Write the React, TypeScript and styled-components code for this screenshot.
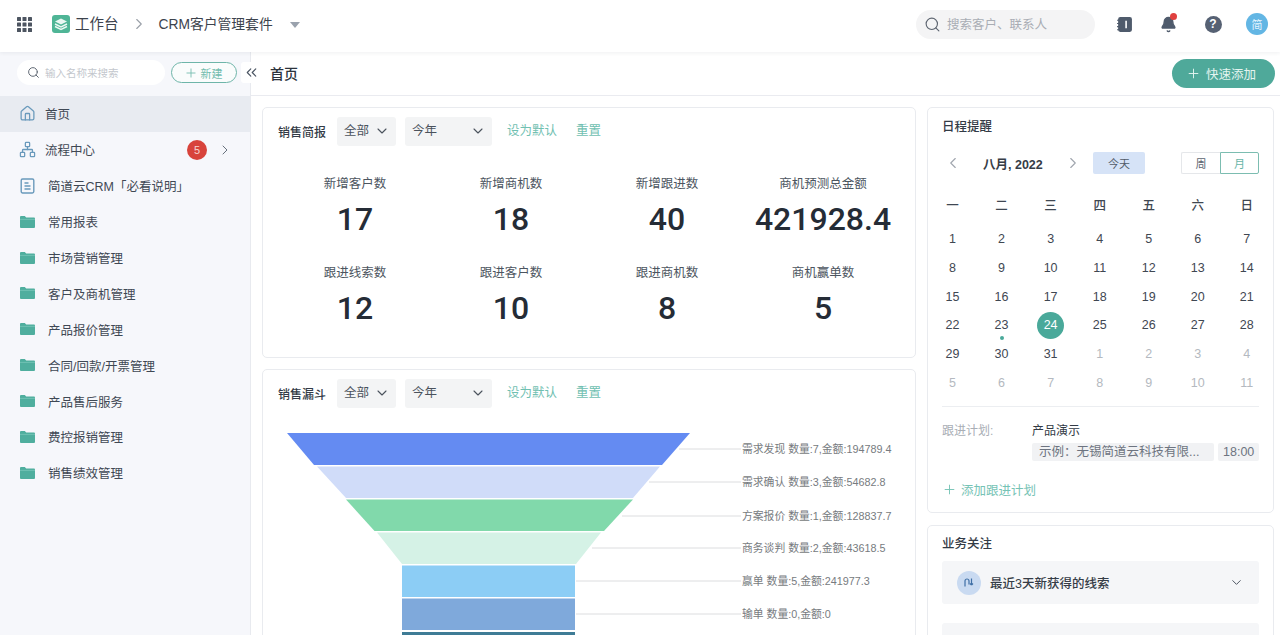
import React from "react";
import styled, { createGlobalStyle } from "styled-components";
import { ChevronRight, ChevronLeft, ChevronDown, ChevronsLeft, Home, Network, Search, Plus, Bell } from "lucide-react";

const Global = createGlobalStyle`
  html, body { margin: 0; padding: 0; height: 100%; overflow: hidden; background: #fff; }
  body { font-family: "Liberation Sans", "Noto Sans CJK SC", sans-serif; color: #2f3742; }
  #root { height: 100%; }
  * { box-sizing: border-box; }
`;

const Page = styled.div`height: 635px; display: flex; flex-direction: column; overflow: hidden;`;
const TopBar = styled.header`
  height: 52px; flex: none; display: flex; align-items: center; background: #fff; padding: 0 11px 4px 17px;
  position: relative; z-index: 2; box-shadow: 0 1px 4px rgba(30,40,60,.07);
`;
const Brand = styled.div`display: flex; align-items: center; margin-left: 20px; font-size: 14.5px; color: #3c434d; gap: 5px;`;
const BrandName = styled.span`padding-bottom: 3px;`;
const Crumb = styled.div`margin-left: 11px; font-size: 13.8px; color: #3c434d; white-space: nowrap; padding-bottom: 2px;`;
const CrumbSep = styled.span`display: flex; margin-left: 11px; color: #9aa0a8;`;
const Caret = styled.span`width: 0; height: 0; margin-left: 17px; margin-top: 2px; border-left: 5px solid transparent; border-right: 5px solid transparent; border-top: 6px solid #9aa2ad;`;
const TopRight = styled.div`margin-left: auto; display: flex; align-items: center;`;
const TopSearch = styled.div`
  width: 179px; height: 29px; border-radius: 15px; background: #f4f4f5; display: flex; align-items: center;
  padding-left: 8px; gap: 6px; font-size: 12.5px; color: #a9adb4; margin-right: 20px;
`;
const SearchText = styled.span`padding-bottom: 2px;`;
const IconSlot = styled.div<{ $gap: number }>`width: 18px; height: 18px; margin-right: ${p => p.$gap}px; display: flex; align-items: center; justify-content: center; position: relative;`;
const RedDot = styled.span`position: absolute; width: 7px; height: 7px; border-radius: 50%; background: #e0413f; right: 0; top: -2px;`;
const HelpDot = styled.span`width: 17px; height: 17px; border-radius: 50%; background: #566173; color: #fff; font-size: 12px; font-weight: 700; display: flex; align-items: center; justify-content: center;`;
const Avatar = styled.span`width: 22px; height: 22px; margin-right: 1px; border-radius: 50%; background: #63b6e4; color: #e6f5ff; font-size: 11px; display: flex; align-items: center; justify-content: center;`;

const Body = styled.div`flex: 1; min-height: 0; display: flex;`;
const Side = styled.aside`width: 251px; flex: none; background: #f6f7fb; border-right: 1px solid #e8eaef; position: relative;`;
const SideTools = styled.div`height: 44px; display: flex; align-items: center; padding: 0 0 3px 17px; gap: 6px;`;
const SideSearch = styled.div`width: 148px; height: 25px; border-radius: 13px; background: #fff; display: flex; align-items: center; padding-left: 10px; gap: 5px; font-size: 10.5px; color: #c3c7cd;`;
const NewBtn = styled.div`width: 66px; height: 21px; border-radius: 11px; border: 1px solid #6eb5a9; background: #fafcfc; color: #72bcae; font-size: 11px; display: flex; align-items: center; justify-content: center; gap: 3px; padding-right: 2px;`;
const Collapse = styled.div`position: absolute; left: 241px; top: 10px; width: 21px; height: 21px; background: #fff; border-radius: 3px; color: #4a5462; display: flex; align-items: center; justify-content: center; z-index: 1;`;
const Row = styled.div<{ $active?: boolean }>`
  height: 35.9px; display: flex; align-items: center; padding-left: 19px; font-size: 12.5px; color: #3f4854;
  background: ${p => (p.$active ? "#e8ebf1" : "transparent")};
`;
const RowIcon = styled.span`width: 17px; display: flex; justify-content: center; color: #6a9abc;`;
const RowText = styled.span<{ $wide?: boolean }>`margin-left: ${p => (p.$wide ? "12px" : "9px")};`;
const Badge = styled.span`margin-left: auto; width: 20px; height: 20px; border-radius: 50%; background: #d8433b; color: #f6d5d0; font-size: 11px; display: flex; align-items: center; justify-content: center;`;
const RowArrow = styled.span`display: flex; margin: 0 17px 0 10px; color: #66707c;`;

const Main = styled.main`flex: 1; min-width: 0; display: flex; flex-direction: column;`;
const SubBar = styled.div`height: 44px; flex: none; display: flex; align-items: center; justify-content: space-between; border-bottom: 1px solid #eaebf0; padding: 0 5px 0 19px;`;
const PageTitle = styled.div`font-size: 14px; font-weight: 500; color: #2c333c; margin-bottom: 1px;`;
const QuickAdd = styled.div`width: 103px; height: 29px; border-radius: 15px; background: #4fa99a; color: #e4f4f0; font-size: 12.5px; display: flex; align-items: center; justify-content: center; gap: 5px; padding-right: 5px;`;
const Columns = styled.div`flex: 1; min-height: 0; display: flex; gap: 11px; padding: 11px 6px 0 11px; overflow: hidden;`;
const Col = styled.div<{ $w: number; $gap: number }>`width: ${p => p.$w}px; flex: none; display: flex; flex-direction: column; gap: ${p => p.$gap}px;`;
const Card = styled.section<{ $h?: number }>`
  background: #fff; border: 1px solid #e9ebef; border-radius: 5px; flex: none;
  ${p => (p.$h ? `height: ${p.$h}px;` : "")}
`;
const FilterBar = styled.div`display: flex; align-items: center; height: 30px; margin: 8px 0 0 15px; font-size: 12px;`;
const FilterTitle = styled.div`font-weight: 500; color: #333b46; width: 59px; font-size: 12px; padding-top: 1px;`;
const Pick = styled.div<{ $w: number }>`width: ${p => p.$w}px; height: 29px; background: #f3f4f5; border-radius: 3px; margin-right: 9px; display: flex; align-items: center; justify-content: space-between; padding: 0 6px 0 7px; color: #4a525c; font-size: 12.5px;`;
const PickText = styled.span`padding-bottom: 3px;`;
const LinkText = styled.span<{ $m: number }>`color: #70c0b1; margin-left: ${p => p.$m}px; font-size: 12.5px; padding-bottom: 3px;`;
const StatGrid = styled.div`display: grid; grid-template-columns: repeat(4, 156px); grid-auto-rows: 89px; padding: 28px 0 0 14px;`;
const Stat = styled.div`text-align: center;`;
const StatLabel = styled.div`font-size: 12.5px; line-height: 20px; color: #4c5560;`;
const StatValue = styled.div`font-family: Roboto, "Liberation Sans", sans-serif; font-weight: 500; font-size: 32px; line-height: 40px; margin-top: 5px; color: #252c36;`;
const ChartWrap = styled.div`height: 240px; margin-top: 12px;`;
const ChartSvg = styled.svg`display: block; font-family: "Liberation Sans", "Noto Sans CJK SC", sans-serif;`;

const CardTitle = styled.div`font-size: 12.5px; font-weight: 500; color: #333b46; padding: 10px 0 0 14px; line-height: 18px;`;
const CalHead = styled.div`display: flex; align-items: center; height: 22px; margin: 16px 14px 0 16px; color: #a0a6ae;`;
const Month = styled.div`font-size: 12.5px; font-weight: 700; color: #363d47; margin-left: 21px; width: 60px; white-space: nowrap;`;
const MonthNext = styled.span`display: flex; margin-left: 21px;`;
const Today = styled.div`width: 52px; height: 22px; margin-left: 11px; background: #d6e3f7; border-radius: 2px; color: #525b68; font-size: 11px; display: flex; align-items: center; justify-content: center;`;
const Seg = styled.div`margin-left: auto; display: flex; height: 22px;`;
const SegBtn = styled.div<{ $on?: boolean }>`width: 39px; border: 1px solid ${p => (p.$on ? "#7cbdb1" : "#e5e7ea")}; ${p => (p.$on ? "border-radius: 0 2px 2px 0;" : "border-radius: 2px 0 0 2px; border-right: none;")} color: ${p => (p.$on ? "#67b5a7" : "#5c6570")}; font-size: 11px; display: flex; align-items: center; justify-content: center;`;
const CalGrid = styled.div`display: grid; grid-template-columns: repeat(7, 49.05px); grid-auto-rows: 28.7px; justify-content: start;`;
const WeekRow = styled(CalGrid)`grid-auto-rows: 28px; margin: 16px 0 7px 0; font-weight: 500;`;
const Cell = styled.div<{ $muted?: boolean }>`display: flex; align-items: center; justify-content: center; font-size: 12.5px; color: ${p => (p.$muted ? "#b4b9c0" : "#3f4752")}; position: relative;`;
const TodayDot = styled.span`width: 27px; height: 27px; border-radius: 50%; background: #4aa99a; color: #fff; display: flex; align-items: center; justify-content: center;`;
const EventDot = styled.span`position: absolute; width: 4px; height: 4px; border-radius: 50%; background: #4aa99a; left: 50%; margin-left: -2px; bottom: 0;`;
const Divider = styled.div`height: 1px; background: #eceef1; margin: 9px 14px 0 14px;`;
const PlanRow = styled.div`display: flex; padding: 15px 14px 0 14px; font-size: 12px;`;
const PlanLabel = styled.div`width: 90px; color: #a9aeb5; line-height: 18px;`;
const PlanBody = styled.div`flex: 1; min-width: 0;`;
const PlanName = styled.div`line-height: 18px; color: #333b46; font-size: 12px;`;
const PlanTags = styled.div`display: flex; gap: 4px; margin-top: 3px;`;
const Tag = styled.div<{ $grow?: boolean }>`height: 18px; line-height: 18px; background: #f1f2f4; border-radius: 2px; color: #6d7480; font-size: 12.5px; padding: 0 5px; text-align: ${p => (p.$grow ? "left" : "center")}; ${p => (p.$grow ? "flex: 1; padding-left: 7px; white-space: nowrap;" : "width: 41px;")}`;
const AddPlan = styled.div`display: flex; align-items: center; gap: 4px; margin: 19px 0 0 14px; font-size: 12.5px; color: #76c3b5;`;
const FocusTitle = styled(CardTitle)`padding-top: 9px;`;
const Focus = styled.div`height: 43px; margin: 8px 14px 0 14px; background: #f5f6f8; border-radius: 3px; display: flex; align-items: center; padding: 0 15px; font-size: 12.5px; font-weight: 500; color: #363d47;`;
const FocusNext = styled(Focus)`margin-top: 19px;`;
const FocusIcon = styled.span`width: 24px; height: 24px; border-radius: 50%; background: #c9daf1; color: #3f6fa6; display: flex; align-items: center; justify-content: center; margin-right: 9px;`;
const FocusArrow = styled.span`margin-left: auto; display: flex; color: #4f5763;`;

const GridIcon = () => (
  <svg width="15" height="15" viewBox="0 0 15 15" fill="#4d5561">
    {[0, 5.5, 11].flatMap(y => [0, 5.5, 11].map(x => <rect key={`${x}-${y}`} x={x} y={y} width="4" height="4" rx=".6" />))}
  </svg>
);
const Logo = () => (
  <svg width="18" height="18" viewBox="0 0 18 18">
    <rect width="18" height="18" rx="3" fill="#4fb596" />
    <path d="M9 3.5l6 3-6 3-6-3z" fill="#eaf7f2" />
    <path d="M3 9l6 3 6-3M3 11.5l6 3 6-3" fill="none" stroke="#eaf7f2" strokeWidth="1.4" />
  </svg>
);
const Notebook = () => (
  <svg width="17" height="17" viewBox="0 0 16 16">
    <rect x="2" y="1" width="13" height="14" rx="2" fill="#4f5b6c" />
    <path d="M9.5 4.5v7" stroke="#fff" strokeWidth="1.5" />
    <path d="M1 4h2M1 7h2M1 10h2M1 13h2" stroke="#4f5b6c" strokeWidth="1" />
  </svg>
);
const DocIcon = () => (
  <svg width="15" height="16" viewBox="0 0 15 16" fill="none" stroke="currentColor" strokeWidth="1.4">
    <rect x="1.2" y="1" width="12.6" height="14" rx="1.4" />
    <path d="M4.5 5h4M4.5 8h6M4.5 11h6" />
  </svg>
);
const FolderIcon = () => (
  <svg width="15" height="12" viewBox="0 0 15 12">
    <path d="M0 1.2C0 .5.5 0 1.2 0h3.6l1.4 1.6h7.6c.7 0 1.2.5 1.2 1.2v7.9c0 .7-.5 1.3-1.2 1.3H1.2C.5 12 0 11.4 0 10.7z" fill="#4fae9e" />
    <path d="M0 3.4h15" stroke="#7fcabd" strokeWidth=".7" />
  </svg>
);

const stats = [
  ["新增客户数", "17"], ["新增商机数", "18"], ["新增跟进数", "40"], ["商机预测总金额", "421928.4"],
  ["跟进线索数", "12"], ["跟进客户数", "10"], ["跟进商机数", "8"], ["商机赢单数", "5"],
];
const folders = ["常用报表", "市场营销管理", "客户及商机管理", "产品报价管理", "合同/回款/开票管理", "产品售后服务", "费控报销管理", "销售绩效管理"];
const week = ["一", "二", "三", "四", "五", "六", "日"];
const days: [number, boolean][] = [
  ...Array.from({ length: 31 }, (_, i) => [i + 1, false] as [number, boolean]),
  ...Array.from({ length: 11 }, (_, i) => [i + 1, true] as [number, boolean]),
];

// Funnel geometry, with the origin at the chart's top-left corner (page x 262, y 420).
const OX = 262, OY = 420;
const funnel = [
  { c: "#648bf2", y: [433, 465], t: [287, 690], b: [314, 662], ly: 449, lx: 679, text: "需求发现 数量:7,金额:194789.4" },
  { c: "#d0dcf9", y: [466.5, 498], t: [317, 660], b: [346, 633], ly: 482, lx: 649, text: "需求确认 数量:3,金额:54682.8" },
  { c: "#81d9ab", y: [499.5, 531], t: [346, 633], b: [374.5, 604], ly: 516, lx: 622, text: "方案报价 数量:1,金额:128837.7" },
  { c: "#d5f2e6", y: [532.5, 564], t: [377, 601], b: [402, 576], ly: 548, lx: 592, text: "商务谈判 数量:2,金额:43618.5" },
  { c: "#8ccdf5", y: [565.5, 597], t: [402, 575], b: [402, 575], ly: 581, lx: 576, text: "赢单 数量:5,金额:241977.3" },
  { c: "#7fa9db", y: [598.5, 630], t: [402, 575], b: [402, 575], ly: 614, lx: 576, text: "输单 数量:0,金额:0" },
  { c: "#3f7c96", y: [632, 664], t: [402, 575], b: [402, 575] },
];

const Filters = ({ title }: { title: string }) => (
  <FilterBar>
    <FilterTitle>{title}</FilterTitle>
    <Pick $w={59}><PickText>全部</PickText><ChevronDown size={16} strokeWidth={1.6} /></Pick>
    <Pick $w={87}><PickText>今年</PickText><ChevronDown size={16} strokeWidth={1.6} /></Pick>
    <LinkText $m={6}>设为默认</LinkText>
    <LinkText $m={19}>重置</LinkText>
  </FilterBar>
);

export default function App() {
  return (
    <Page>
      <Global />
      <TopBar>
        <GridIcon />
        <Brand><Logo /><BrandName>工作台</BrandName></Brand>
        <CrumbSep><ChevronRight size={18} strokeWidth={1.5} /></CrumbSep>
        <Crumb>CRM客户管理套件</Crumb>
        <Caret />
        <TopRight>
          <TopSearch><Search size={17} strokeWidth={1.6} color="#5d6570" /><SearchText>搜索客户、联系人</SearchText></TopSearch>
          <IconSlot $gap={26}><Notebook /></IconSlot>
          <IconSlot $gap={27}><Bell size={17} fill="#4f5b6c" color="#4f5b6c" /><RedDot /></IconSlot>
          <IconSlot $gap={24}><HelpDot>?</HelpDot></IconSlot>
          <Avatar>简</Avatar>
        </TopRight>
      </TopBar>
      <Body>
        <Side>
          <SideTools>
            <SideSearch><Search size={13} strokeWidth={1.8} color="#5d6570" />输入名称来搜索</SideSearch>
            <NewBtn><Plus size={14} strokeWidth={1.5} />新建</NewBtn>
          </SideTools>
          <Collapse><ChevronsLeft size={17} strokeWidth={1.6} /></Collapse>
          <Row $active><RowIcon><Home size={17} strokeWidth={1.8} /></RowIcon><RowText>首页</RowText></Row>
          <Row><RowIcon><Network size={17} strokeWidth={1.8} /></RowIcon><RowText>流程中心</RowText><Badge>5</Badge><RowArrow><ChevronRight size={16} strokeWidth={1.5} /></RowArrow></Row>
          <Row><RowIcon><DocIcon /></RowIcon><RowText $wide>简道云CRM「必看说明」</RowText></Row>
          {folders.map(f => (
            <Row key={f}><RowIcon><FolderIcon /></RowIcon><RowText $wide>{f}</RowText></Row>
          ))}
        </Side>
        <Main>
          <SubBar>
            <PageTitle>首页</PageTitle>
            <QuickAdd><Plus size={15} strokeWidth={1.5} />快速添加</QuickAdd>
          </SubBar>
          <Columns>
            <Col $w={654} $gap={11}>
              <Card $h={251}>
                <Filters title="销售简报" />
                <StatGrid>
                  {stats.map(([l, v]) => (
                    <Stat key={l}><StatLabel>{l}</StatLabel><StatValue>{v}</StatValue></Stat>
                  ))}
                </StatGrid>
              </Card>
              <Card>
                <Filters title="销售漏斗" />
                <ChartWrap>
                  <ChartSvg width="652" height="240" viewBox={`${OX + 1} ${OY} 652 240`}>
                    {funnel.map(s => (
                      <g key={s.c}>
                        <polygon points={`${s.t[0]},${s.y[0]} ${s.t[1]},${s.y[0]} ${s.b[1]},${s.y[1]} ${s.b[0]},${s.y[1]}`} fill={s.c} />
                        {s.text && <line x1={s.lx} x2={741} y1={s.ly} y2={s.ly} stroke="#dcdddf" strokeWidth="1" />}
                        {s.text && <text x={742} y={s.ly + 4} fontSize="10.8" fill="#777b80">{s.text}</text>}
                      </g>
                    ))}
                  </ChartSvg>
                </ChartWrap>
              </Card>
            </Col>
            <Col $w={347} $gap={12}>
              <Card $h={406}>
                <CardTitle>日程提醒</CardTitle>
                <CalHead>
                  <ChevronLeft size={18} strokeWidth={1.5} />
                  <Month>八月, 2022</Month>
                  <MonthNext><ChevronRight size={18} strokeWidth={1.5} /></MonthNext>
                  <Today>今天</Today>
                  <Seg><SegBtn>周</SegBtn><SegBtn $on>月</SegBtn></Seg>
                </CalHead>
                <WeekRow>{week.map(w => <Cell key={w}>{w}</Cell>)}</WeekRow>
                <CalGrid>
                  {days.map(([d, muted], i) => (
                    <Cell key={i} $muted={muted}>
                      {d === 24 && !muted ? <TodayDot>{d}</TodayDot> : d}
                      {d === 23 && !muted && <EventDot />}
                    </Cell>
                  ))}
                </CalGrid>
                <Divider />
                <PlanRow>
                  <PlanLabel>跟进计划:</PlanLabel>
                  <PlanBody>
                    <PlanName>产品演示</PlanName>
                    <PlanTags><Tag $grow>示例：无锡简道云科技有限...</Tag><Tag>18:00</Tag></PlanTags>
                  </PlanBody>
                </PlanRow>
                <AddPlan><Plus size={15} strokeWidth={1.5} />添加跟进计划</AddPlan>
              </Card>
              <Card>
                <FocusTitle>业务关注</FocusTitle>
                <Focus>
                  <FocusIcon>
                    <svg width="11" height="11" viewBox="0 0 11 11" fill="none" stroke="currentColor" strokeWidth="1.2"><path d="M1 9.5V4a2 2 0 0 1 4 0v3.5" /><path d="M7.5 1.5V8M7.5 8l1.5-1.5M7.5 8L6 6.5" /></svg>
                  </FocusIcon>
                  最近3天新获得的线索
                  <FocusArrow><ChevronDown size={15} strokeWidth={1.6} /></FocusArrow>
                </Focus>
                <FocusNext />
              </Card>
            </Col>
          </Columns>
        </Main>
      </Body>
    </Page>
  );
}
